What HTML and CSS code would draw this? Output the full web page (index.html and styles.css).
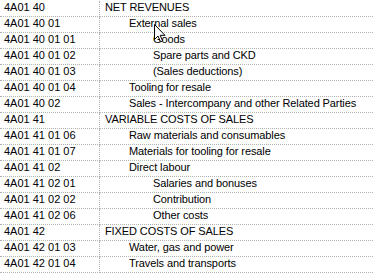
FILE: index.html
```html
<!DOCTYPE html>
<html lang="en">
<head>
    <meta charset="UTF-8">
    <title>accounts</title>
    <link rel="stylesheet" href="styles.css">
</head>
<body>
<div class="list" id="list">
    <div class="row"><span class="code">4A01 40</span><span class="name">NET REVENUES</span></div>
    <div class="row"><span class="code">4A01 40 01</span><span class="name l1">External sales</span></div>
    <div class="row"><span class="code">4A01 40 01 01</span><span class="name l2">Goods</span></div>
    <div class="row"><span class="code">4A01 40 01 02</span><span class="name l2">Spare parts and CKD</span></div>
    <div class="row"><span class="code">4A01 40 01 03</span><span class="name l2">(Sales deductions)</span></div>
    <div class="row"><span class="code">4A01 40 01 04</span><span class="name l1">Tooling for resale</span></div>
    <div class="row"><span class="code">4A01 40 02</span><span class="name l1">Sales - Intercompany and other Related Parties</span></div>
    <div class="row"><span class="code">4A01 41</span><span class="name">VARIABLE COSTS OF SALES</span></div>
    <div class="row"><span class="code">4A01 41 01 06</span><span class="name l1">Raw materials and consumables</span></div>
    <div class="row"><span class="code">4A01 41 01 07</span><span class="name l1">Materials for tooling for resale</span></div>
    <div class="row"><span class="code">4A01 41 02</span><span class="name l1">Direct labour</span></div>
    <div class="row"><span class="code">4A01 41 02 01</span><span class="name l2">Salaries and bonuses</span></div>
    <div class="row"><span class="code">4A01 41 02 02</span><span class="name l2">Contribution</span></div>
    <div class="row"><span class="code">4A01 41 02 06</span><span class="name l2">Other costs</span></div>
    <div class="row"><span class="code">4A01 42</span><span class="name">FIXED COSTS OF SALES</span></div>
    <div class="row"><span class="code">4A01 42 01 03</span><span class="name l1">Water, gas and power</span></div>
    <div class="row"><span class="code">4A01 42 01 04</span><span class="name l1">Travels and transports</span></div>

    <!-- mouse pointer over the list -->
    <svg class="cursor" width="12" height="19" viewBox="0 0 12 19">
        <path d="M0.5 0.5 L0.5 15.5 L4 12 L6.5 17.8 L8.6 16.9 L6.2 11.3 L11 11.3 Z" fill="#fff" stroke="#000" stroke-width="1"/>
    </svg>
</div>
</body>
</html>
```
FILE: styles.css
```css
*{
    margin:0;
    padding:0;
}

body{
    background: #fff;
    font-family: "Liberation Sans", Arial, sans-serif;
    font-size: 11px;
    color: #000;
}

.list{
    width: 373px;
    padding-top: 1px;
    position: relative;
}

.row{
    display: flex;
    height: 16px;
    line-height: 13px;
}

.code{
    width: 95px;
    padding-left: 4px;
    border-right: 1px dotted #b4b4b4;
    border-bottom: 1px dotted #b4b4b4;
    flex: none;
}

.name{
    flex: 1;
    padding-left: 5px;
    border-bottom: 1px dotted #b4b4b4;
    white-space: nowrap;
    letter-spacing: -0.1px;
}
.l1{
    padding-left: 29px;
}
.l2{
    padding-left: 53px;
}

.cursor{
    position: absolute;
    left: 154px;
    top: 24px;
}
```
